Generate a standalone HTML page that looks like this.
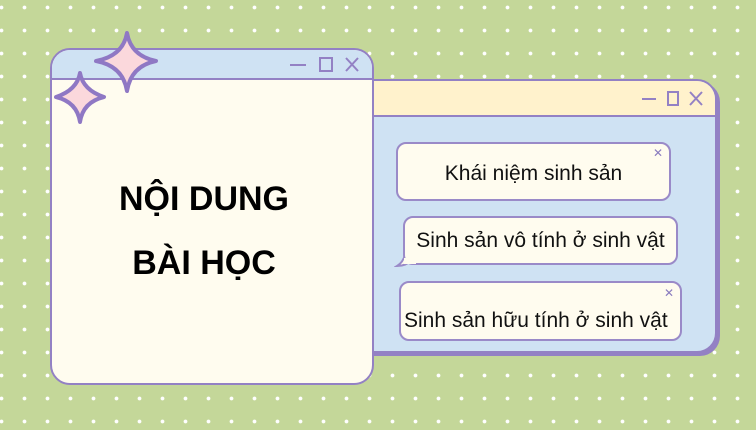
<!DOCTYPE html>
<html><head><meta charset="utf-8"><style>
*{margin:0;padding:0;box-sizing:border-box}
body{width:756px;height:430px;overflow:hidden;position:relative;background-color:#c4d799;
background-image:radial-gradient(circle,#fff 1.6px,transparent 2.2px);background-size:23px 23px;background-position:-10px -4px;font-family:"Liberation Sans",sans-serif}
.abs{position:absolute}
.win2{left:358px;top:79px;width:359px;height:274px;border:2px solid #9381c4;border-radius:0 20px 20px 0;background:#cfe2f3;box-shadow:3px 3px 0 #9381c4;overflow:hidden}
.win2 .bar{height:36px;background:#fff2cc;border-bottom:2px solid #9381c4}
.win1{left:50px;top:48px;width:324px;height:337px;border:2px solid #9381c4;border-radius:20px;background:#fffcef;overflow:hidden}
.win1 .bar{height:30px;background:#cfe2f3;border-bottom:2px solid #9381c4}
.box{position:absolute;border:2px solid #9a8ac8;border-radius:10px;background:#fffcef;font-size:21px;color:#111;display:flex;align-items:center;justify-content:center;white-space:nowrap}
.x{position:absolute;font-size:12px;color:#8a7cbf;line-height:12px}
.title{position:absolute;left:54px;width:300px;text-align:center;font-weight:bold;font-size:34px;color:#000}
</style></head><body>
<div class="abs win2"><div class="bar"></div></div>
<svg class="abs" style="left:640px;top:90px" width="68" height="20" stroke="#9381c4" stroke-width="2" fill="none">
<line x1="2" y1="9" x2="16" y2="9"/><rect x="28" y="2" width="10" height="13"/><path d="M50 2 L62 15 M62 2 L50 15"/></svg>
<div class="abs win1"><div class="bar"></div></div>
<svg class="abs" style="left:288px;top:55px" width="72" height="20" stroke="#9381c4" stroke-width="2" fill="none">
<line x1="2" y1="10" x2="18" y2="10"/><rect x="32" y="3" width="12" height="13"/><path d="M58 3 L70 16 M70 3 L58 16"/></svg>
<svg class="abs" style="left:50px;top:30px" width="115" height="100" stroke="#8f78c4" stroke-width="4" stroke-linejoin="round" fill="#fbd8dc">
<path d="M77 3 Q81 26 106 31 Q81 36 77 61 Q73 36 46 31 Q73 26 77 3Z"/>
<path d="M30 43 Q33 60 54 67 Q33 72 30 92 Q27 72 6 67 Q27 60 30 43Z"/></svg>
<div class="title" style="top:180px">NỘI DUNG</div>
<div class="title" style="top:244px">BÀI HỌC</div>
<div class="box" style="left:396px;top:142px;width:275px;height:59px"><span style="margin-top:4px">Khái niệm sinh sản</span><span class="x" style="right:6px;top:3px">✕</span></div>
<svg class="abs" style="left:394px;top:250px" width="20" height="20"><path d="M12 1 Q10 12 3 16 Q12 16 18 10" fill="#fffcef" stroke="#9a8ac8" stroke-width="2"/></svg>
<div class="box" style="left:403px;top:216px;width:275px;height:49px">Sinh sản vô tính ở sinh vật</div>
<svg class="abs" style="left:404px;top:258px" width="12" height="6"><rect width="12" height="6" fill="#fffcef"/></svg>
<div class="box" style="left:399px;top:281px;width:283px;height:60px;justify-content:flex-start;padding-left:3px"><span style="margin-top:20px">Sinh sản hữu tính ở sinh vật</span><span class="x" style="right:6px;top:4px">✕</span></div>
</body></html>
